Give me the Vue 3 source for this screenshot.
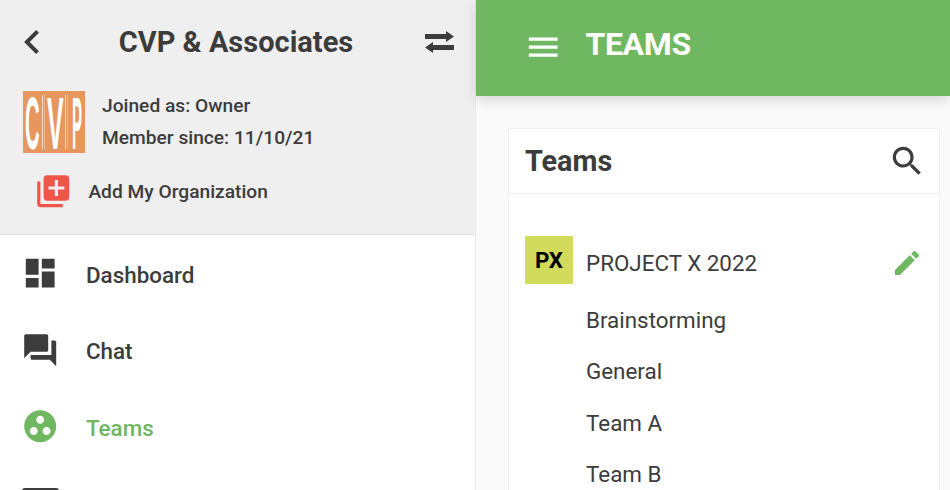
<script setup>
const navItems = [
  { label: 'Dashboard', icon: 'M3 13h8V3H3v10zm0 8h8v-6H3v6zm10 0h8V11h-8v10zm0-18v6h8V3h-8z' },
  { label: 'Chat', icon: 'M21 6h-2v9H6v2c0 .55.45 1 1 1h11l4 4V7c0-.55-.45-1-1-1zm-4 6V3c0-.55-.45-1-1-1H3c-.55 0-1 .45-1 1v14l4-4h10c.55 0 1-.45 1-1z' },
  {
    label: 'Teams',
    active: true,
    icon: 'M12 2C6.48 2 2 6.48 2 12s4.48 10 10 10 10-4.48 10-10S17.52 2 12 2zM8 17.5c-1.38 0-2.5-1.12-2.5-2.5s1.12-2.5 2.5-2.5 2.5 1.12 2.5 2.5-1.12 2.5-2.5 2.5zM9.5 8c0-1.38 1.12-2.5 2.5-2.5s2.5 1.12 2.5 2.5-1.12 2.5-2.5 2.5S9.5 9.38 9.5 8zm6.5 9.5c-1.38 0-2.5-1.12-2.5-2.5s1.12-2.5 2.5-2.5 2.5 1.12 2.5 2.5-1.12 2.5-2.5 2.5z',
  },
]

const channels = ['Brainstorming', 'General', 'Team A', 'Team B']
</script>

<template>
  <div class="page">
    <aside class="sidebar">
      <section class="org">
        <div class="org-top">
          <svg class="back" viewBox="8 6 7.41 12" width="15" height="24">
            <path d="M15.41 7.41L14 6l-6 6 6 6 1.41-1.41L10.83 12z" fill="#3c3c3c" />
          </svg>
          <h1>CVP &amp; Associates</h1>
          <svg class="switch" viewBox="0 0 29 22" width="29" height="22">
            <path d="M0 3h21V0l8 5.5-8 5.500V8H0zM29 14H8v-3L0 16.500 8 22v-3h21z" fill="#3c3c3c" />
          </svg>
        </div>
        <div class="org-info">
          <svg class="logo" viewBox="0 0 62 62" width="62" height="62">
            <rect width="62" height="62" fill="#e7965e" />
            <text transform="translate(2 58) scale(0.27 1)" class="logo-text">C</text>
            <text transform="translate(24 58) scale(0.33 1)" class="logo-text">V</text>
            <text transform="translate(49 58) scale(0.2 1)" class="logo-text">P</text>
            <rect x="19" y="4" width="1" height="54" fill="#f6dcc8" />
            <rect x="21" y="4" width="0.8" height="54" fill="#f0bf9c" />
            <rect x="42" y="4" width="1" height="54" fill="#f6dcc8" />
            <rect x="44" y="4" width="0.8" height="54" fill="#f0bf9c" />
          </svg>
          <div class="org-lines">
            <p>Joined as: Owner</p>
            <p>Member since: 11/10/21</p>
          </div>
        </div>
        <div class="org-add">
          <svg viewBox="0 0 24 24" width="38.4" height="38.4">
            <path d="M4 6H2v14c0 1.100.9 2 2 2h14v-2H4V6zm16-4H8c-1.100 0-2 .9-2 2v12c0 1.100.9 2 2 2h12c1.100 0 2-.9 2-2V4c0-1.100-.9-2-2-2zm-1 9h-4v4h-2v-4H9V9h4V5h2v4h4v2z" fill="#ef5548" />
          </svg>
          <span>Add My Organization</span>
        </div>
      </section>

      <nav class="nav">
        <div v-for="item in navItems" :key="item.label" class="nav-item" :class="{ active: item.active }">
          <svg viewBox="0 0 24 24" width="38.4" height="38.4">
            <path :d="item.icon" fill="currentColor" />
          </svg>
          <span>{{ item.label }}</span>
        </div>
        <div class="nav-item cut"><i class="cut-bar"></i></div>
      </nav>
    </aside>

    <main class="main">
      <header class="appbar">
        <svg viewBox="0 0 24 24" width="38.4" height="38.4">
          <path d="M3 18h18v-2H3v2zm0-5h18v-2H3v2zm0-7v2h18V6H3z" fill="#fff" />
        </svg>
        <h2>TEAMS</h2>
      </header>
      <div class="content">
        <section class="card">
          <div class="card-head">
            <h3>Teams</h3>
            <svg viewBox="0 0 24 24" width="38.4" height="38.4">
              <path d="M15.5 14h-.79l-.28-.27C15.41 12.59 16 11.11 16 9.5 16 5.91 13.09 3 9.5 3S3 5.91 3 9.5 5.91 16 9.5 16c1.61 0 3.09-.59 4.23-1.57l.27.28v.79l5 4.99L20.49 19l-4.99-5zm-6 0C7.01 14 5 11.99 5 9.5S7.010 5 9.5 5 14 7.010 14 9.5 11.99 14 9.5 14z" fill="#3c3c3c" />
            </svg>
          </div>
          <div class="card-body">
            <div class="team-row">
              <span class="team-badge">PX</span>
              <span class="team-name">PROJECT X 2022</span>
              <svg class="edit" viewBox="0 0 24 24" width="32" height="32">
                <path d="M3 17.25V21h3.75L17.81 9.94l-3.75-3.75L3 17.25zM20.71 7.04c.39-.39.39-1.020 0-1.410l-2.340-2.340c-.39-.39-1.020-.39-1.410 0l-1.830 1.830 3.750 3.750 1.830-1.830z" fill="#70b762" />
              </svg>
            </div>
            <ul class="channels">
              <li v-for="channel in channels" :key="channel">{{ channel }}</li>
            </ul>
          </div>
        </section>
      </div>
    </main>
  </div>
</template>

<style>
html,
body {
  margin: 0;
  overflow: hidden;
  background: #fff;
}
</style>

<style scoped>
.page {
  display: flex;
  width: 950px;
  height: 490px;
  overflow: hidden;
  font-family: Roboto, "Liberation Sans", sans-serif;
  color: #3c3c3c;
}

.sidebar {
  flex: none;
  width: 475px;
  height: 490px;
  border-right: 1px solid #e8e8e8;
  overflow: hidden;
  background: #fff;
}

.org {
  height: 234px;
  background: #efefef;
  border-bottom: 1px solid #e2e2e2;
}

.org-top {
  display: flex;
  align-items: center;
  justify-content: space-between;
  height: 84px;
  padding: 0 21px 0 24px;
}

.org-top h1 {
  margin: 0 0 0 8px;
  font-size: 29px;
  font-weight: 700;
  line-height: 34px;
}

.org-info {
  display: flex;
  align-items: center;
  gap: 17px;
  padding: 6px 0 0 23px;
}

.logo {
  overflow: visible;
}

.logo-text {
  font-family: "Liberation Sans", sans-serif;
  font-size: 75px;
  font-weight: 700;
  fill: #fff;
}

.org-lines p {
  margin: 0;
  font-size: 19.2px;
  font-weight: 500;
  line-height: 32px;
}

.org-add {
  display: flex;
  align-items: center;
  gap: 16px;
  padding: 18px 0 0 34px;
  font-size: 19.2px;
  font-weight: 500;
}

.nav {
  padding-top: 1.7px;
}

.nav-item {
  display: flex;
  align-items: center;
  gap: 26.6px;
  height: 76.5px;
  padding-left: 21px;
  font-size: 22.4px;
  font-weight: 500;
}

.nav-item svg {
  margin-bottom: 3px;
}

.nav-item.active {
  color: #70b762;
}

.cut {
  align-items: flex-start;
  padding: 21.8px 0 0 22px;
}

.cut-bar {
  display: block;
  width: 37px;
  height: 4px;
  background: #3c3c3c;
  border-radius: 3px 3px 0 0;
}

.main {
  flex: 1;
  min-width: 0;
  background: #fafafa;
}

.appbar {
  position: relative;
  display: flex;
  align-items: center;
  gap: 23px;
  height: 96px;
  padding: 0 0 2px 48px;
  box-sizing: border-box;
  background: #70b762;
  box-shadow: 0 4px 12px rgba(0, 0, 0, 0.14);
}

.appbar h2 {
  margin: 0 0 6px;
  color: #fff;
  font-size: 32px;
  font-weight: 700;
  letter-spacing: -0.3px;
}

.content {
  padding: 32px 10px 0 32px;
}

.card {
  height: 380px;
  border: 1px solid #eee;
  background: #fff;
}

.card-head {
  display: flex;
  align-items: center;
  justify-content: space-between;
  height: 64px;
  padding: 0 13px 0 16px;
  border-bottom: 1px solid #eee;
}

.card-head h3 {
  margin: 0;
  font-size: 28.8px;
  font-weight: 700;
}

.card-body {
  padding: 42px 16px 0 16px;
}

.team-row {
  display: flex;
  align-items: center;
  gap: 13px;
}

.team-badge {
  display: flex;
  align-items: center;
  justify-content: center;
  width: 48px;
  height: 48px;
  background: #d2da5b;
  color: #000;
  font-size: 22.4px;
  font-weight: 700;
}

.team-name {
  flex: 1;
  padding-top: 5px;
  font-size: 22.4px;
}

.edit {
  margin-top: 5px;
}

.channels {
  margin: 0;
  padding: 11px 0 0 61px;
  list-style: none;
  font-size: 22.4px;
}

.channels li {
  height: 51.4px;
  line-height: 51.4px;
}
</style>
